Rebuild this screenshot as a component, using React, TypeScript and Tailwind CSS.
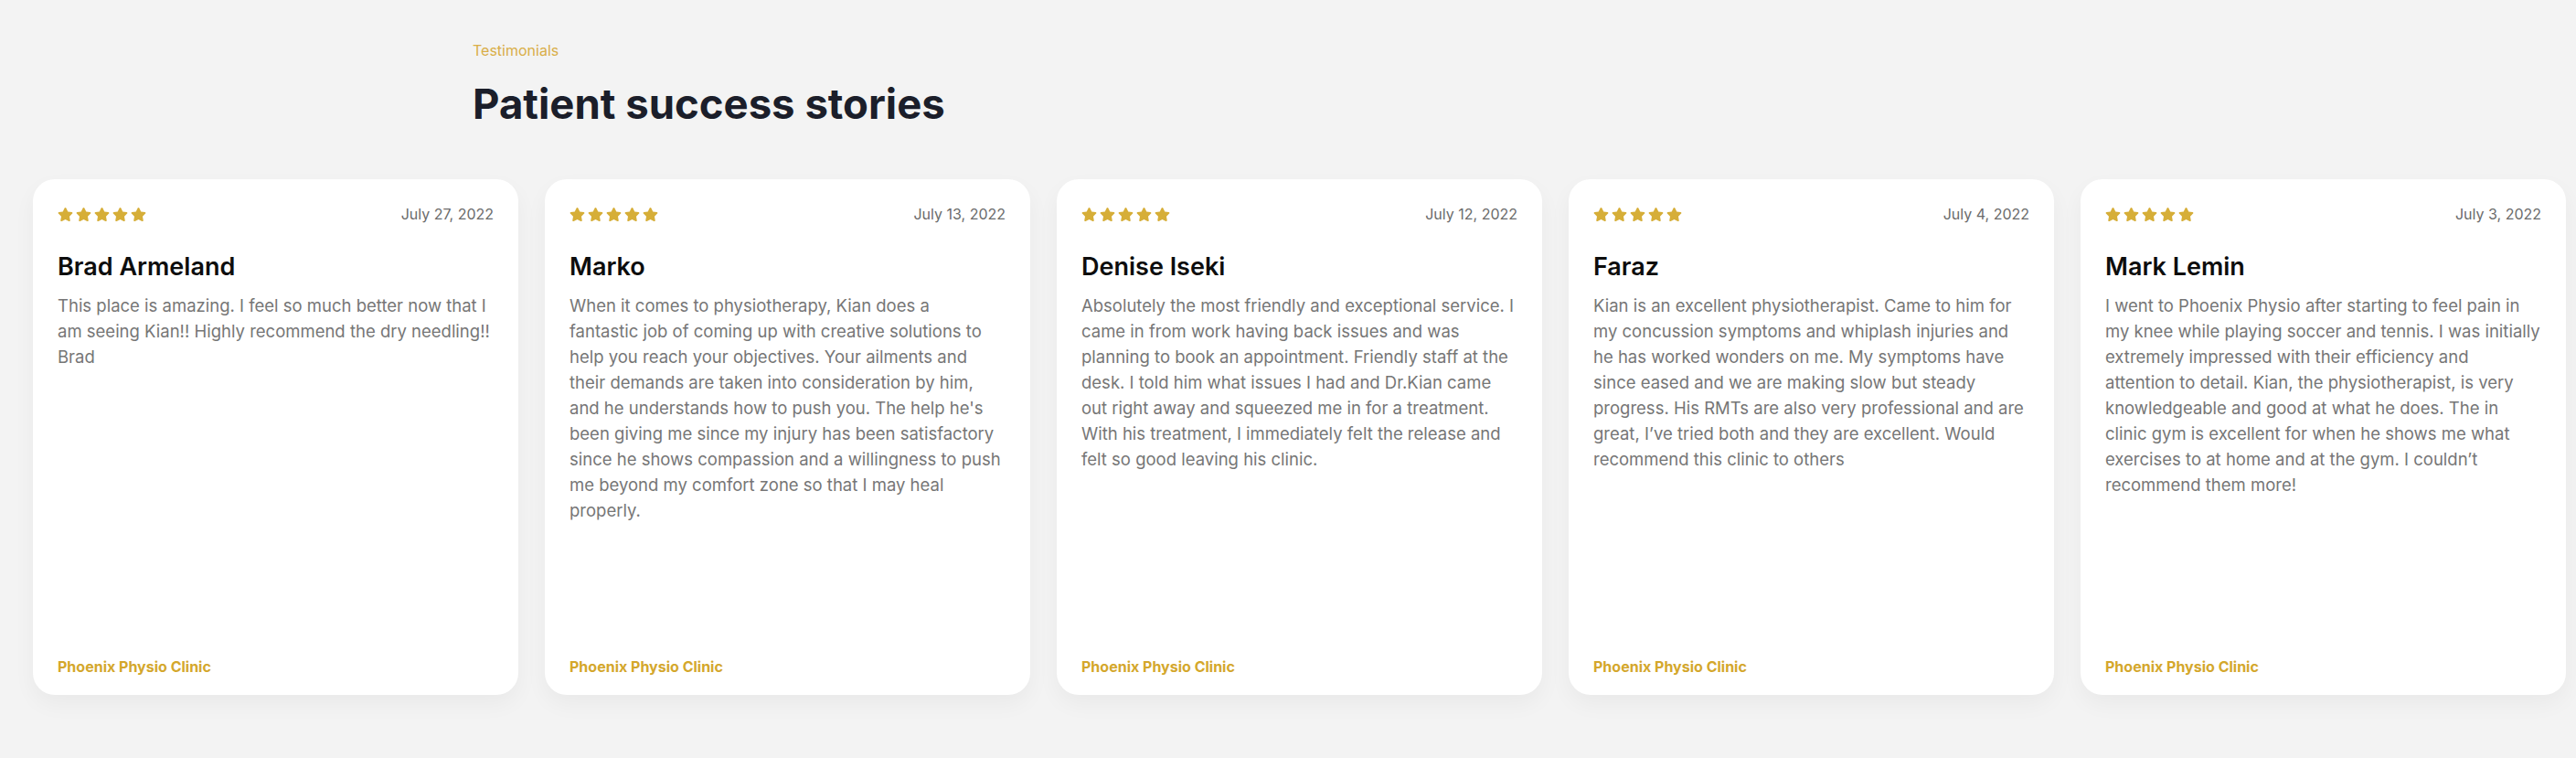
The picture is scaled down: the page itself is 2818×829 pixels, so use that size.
import { FaStar } from "react-icons/fa";

interface Review {
  name: string;
  date: string;
  text: string;
}

// Marko's first line breaks early in the original, so the break is kept in the text.
const reviews: Review[] = [
  {
    name: "Brad Armeland",
    date: "July 27, 2022",
    text: "This place is amazing. I feel so much better now that I am seeing Kian!! Highly recommend the dry needling!! Brad",
  },
  {
    name: "Marko",
    date: "July 13, 2022",
    text: "When it comes to physiotherapy, Kian does a\nfantastic job of coming up with creative solutions to help you reach your objectives. Your ailments and their demands are taken into consideration by him, and he understands how to push you. The help he's been giving me since my injury has been satisfactory since he shows compassion and a willingness to push me beyond my comfort zone so that I may heal properly.",
  },
  {
    name: "Denise Iseki",
    date: "July 12, 2022",
    text: "Absolutely the most friendly and exceptional service. I came in from work having back issues and was planning to book an appointment. Friendly staff at the desk. I told him what issues I had and Dr.Kian came out right away and squeezed me in for a treatment. With his treatment, I immediately felt the release and felt so good leaving his clinic.",
  },
  {
    name: "Faraz",
    date: "July 4, 2022",
    text: "Kian is an excellent physiotherapist. Came to him for my concussion symptoms and whiplash injuries and he has worked wonders on me. My symptoms have since eased and we are making slow but steady progress. His RMTs are also very professional and are great, I\u2019ve tried both and they are excellent. Would recommend this clinic to others",
  },
  {
    name: "Mark Lemin",
    date: "July 3, 2022",
    text: "I went to Phoenix Physio after starting to feel pain in my knee while playing soccer and tennis. I was initially extremely impressed with their efficiency and attention to detail. Kian, the physiotherapist, is very knowledgeable and good at what he does. The in clinic gym is excellent for when he shows me what exercises to at home and at the gym. I couldn\u2019t recommend them more!",
  },
];

function Stars() {
  return (
    <div className="flex items-center gap-[3px] text-[#d6ae38]">
      {[0, 1, 2, 3, 4].map((i) => (
        <FaStar key={i} size={17} />
      ))}
    </div>
  );
}

function ReviewCard({ review }: { review: Review }) {
  return (
    <div className="flex h-[564px] w-[531px] shrink-0 flex-col rounded-[24px] bg-white px-[27px] pt-[26px] pb-[19px] shadow-[0_10px_25px_rgba(0,0,0,0.045)]">
      <div className="flex h-[24px] items-center justify-between">
        <Stars />
        <span className="text-[16px] leading-[24px] text-[#6b6b6b]">{review.date}</span>
      </div>
      <h3 className="mt-[30px] text-[27px] leading-[31px] font-semibold text-[#0d0d0d]">{review.name}</h3>
      <p className="mt-[13px] whitespace-pre-line text-[18.5px] leading-[28px] text-[#767676]">{review.text}</p>
      <div className="flex-1" />
      <p className="text-[16px] leading-[24px] font-bold text-[#d4a72c]">Phoenix Physio Clinic</p>
    </div>
  );
}

export default function App() {
  return (
    <div className="min-h-screen bg-[#f3f3f3] font-['Inter','Noto_Sans',sans-serif]">
      <div className="pl-[517px] pt-[43px]">
        <p className="text-[16px] leading-[24px] text-[#d9ae47]">Testimonials</p>
        <h2 className="mt-[19px] text-[45.5px] leading-[55px] font-bold text-[#1b1e2a]">Patient success stories</h2>
      </div>
      <div className="mt-[55px] flex gap-[29px] pl-[36px]">
        {reviews.map((r) => (
          <ReviewCard key={r.name} review={r} />
        ))}
      </div>
    </div>
  );
}
